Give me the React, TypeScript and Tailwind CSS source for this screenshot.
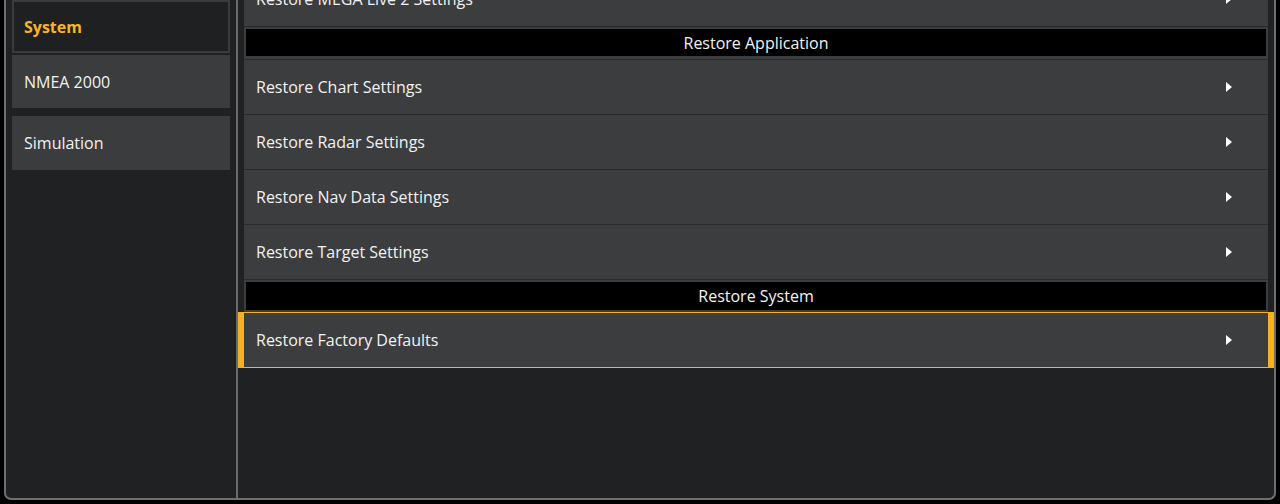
import React from 'react';

const appRows = [
  'Restore Chart Settings',
  'Restore Radar Settings',
  'Restore Nav Data Settings',
  'Restore Target Settings',
];

function Arrow() {
  return (
    <svg viewBox="0 0 6 10" className="w-[6px] h-[10px] shrink-0" fill="#ffffff">
      <polygon points="0,0 6,5 0,10" />
    </svg>
  );
}

function Row({ label }: { label: string }) {
  return (
    <div className="h-[55px] shrink-0 flex items-center justify-between pl-[12px] pr-[36px] bg-[#3c3d3f] border-b border-[#28292b]">
      <span className="text-[16px] text-[#f2f2f2]">{label}</span>
      <Arrow />
    </div>
  );
}

function Header({ label, last }: { label: string; last?: boolean }) {
  return (
    <div
      className={
        last
          ? 'h-[32px] shrink-0 bg-[#3c3d3f] p-[2px]'
          : 'h-[33px] shrink-0 bg-[#3c3d3f] p-[2px] pb-[3px] border-b border-[#28292b]'
      }
    >
      <div className="h-full bg-black flex items-center justify-center text-[16px] text-[#f2f2f2]">{label}</div>
    </div>
  );
}

export default function App() {
  return (
    <div
      className="w-[1280px] h-[504px] bg-black overflow-hidden"
      style={{ fontFamily: '"Open Sans", "Liberation Sans", sans-serif' }}
    >
      <div className="mx-[4px] h-[500px] flex bg-[#202123] border-x-2 border-b-2 border-[#6f6f6f] rounded-b-[7px] overflow-hidden">
        {/* Sidebar */}
        <aside className="w-[232px] shrink-0 flex flex-col pl-[6px] pr-[6px] border-r-2 border-[#6a6a6a]">
          <div className="h-[53px] flex items-center px-[10px] bg-[#1f2022] border-2 border-[#3a3b3d] text-[16px] font-bold text-[#f7b521]">
            System
          </div>
          <div className="mt-[2px] h-[53px] flex items-center px-[12px] bg-[#3b3c3e] text-[16px] text-[#f2f2f2]">
            NMEA 2000
          </div>
          <div className="mt-[8px] h-[54px] flex items-center px-[12px] bg-[#3b3c3e] text-[16px] text-[#f2f2f2]">
            Simulation
          </div>
        </aside>

        {/* Content */}
        <main className="flex-1 flex flex-col px-[6px] -mt-[28px]">
          <Row label="Restore MEGA Live 2 Settings" />
          <Header label="Restore Application" />
          {appRows.map(r => (
            <Row key={r} label={r} />
          ))}
          <Header label="Restore System" last />
          <div className="-mx-[6px] h-[56px] shrink-0 flex items-center justify-between pl-[12px] pr-[36px] bg-[#3c3d3f] border-x-[6px] border-y border-[#f5b121]">
            <span className="text-[16px] text-[#f2f2f2]">Restore Factory Defaults</span>
            <Arrow />
          </div>
        </main>
      </div>
    </div>
  );
}
